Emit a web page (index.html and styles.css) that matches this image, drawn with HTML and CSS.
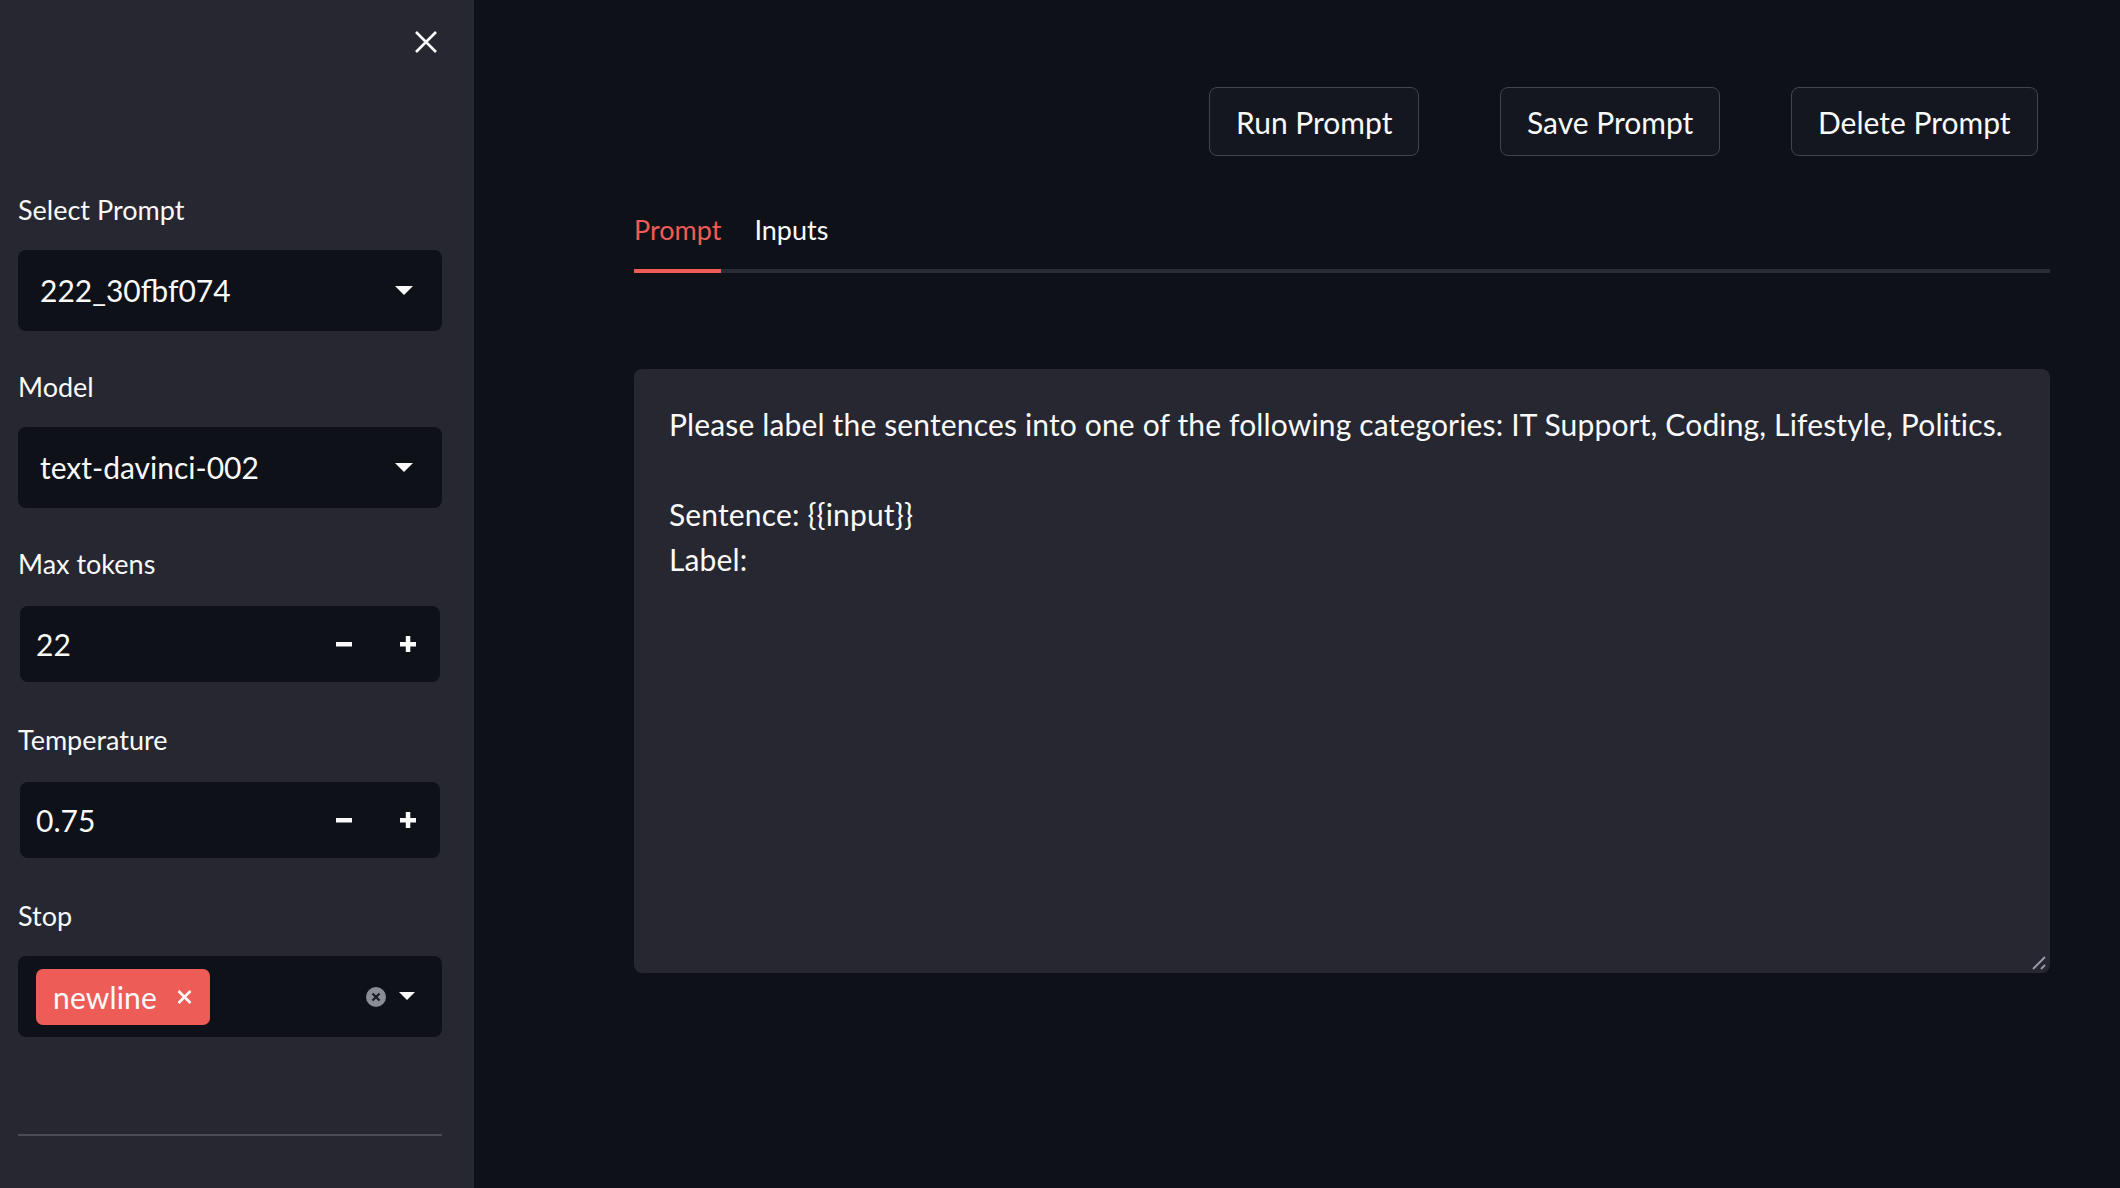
FILE: index.html
```html
<!DOCTYPE html>
<html lang="en">
<head>
<meta charset="utf-8">
<title>Prompt editor</title>
<link rel="stylesheet" href="styles.css">
</head>
<body>
<div class="app">
  <aside class="sidebar">
    <div class="sb-head">
      <button class="close-btn" aria-label="Close sidebar">
        <svg width="24" height="24" viewBox="0 0 24 24"><path d="M2 2 L22 22 M22 2 L2 22" stroke="#fafafa" stroke-width="2.6" stroke-linecap="butt" fill="none"/></svg>
      </button>
    </div>

    <div class="field">
      <div class="label">Select Prompt</div>
      <div class="select">
        <span class="value">222_30fbf074</span>
        <svg class="caret" width="18" height="9" viewBox="0 0 18 9"><polygon points="0,0 18,0 9,9" fill="#fafafa"/></svg>
      </div>
    </div>

    <div class="field">
      <div class="label">Model</div>
      <div class="select">
        <span class="value">text-davinci-002</span>
        <svg class="caret" width="18" height="9" viewBox="0 0 18 9"><polygon points="0,0 18,0 9,9" fill="#fafafa"/></svg>
      </div>
    </div>

    <div class="field">
      <div class="label">Max tokens</div>
      <div class="number">
        <div class="number-inner">
          <span class="num-value">22</span>
          <span class="step"><svg width="16" height="16" viewBox="0 0 16 16"><rect x="0" y="6" width="16" height="4.5" fill="#fafafa"/></svg></span>
          <span class="step"><svg width="16" height="16" viewBox="0 0 16 16"><rect x="0" y="6" width="16" height="4.5" fill="#fafafa"/><rect x="5.8" y="0" width="4.5" height="16" fill="#fafafa"/></svg></span>
        </div>
      </div>
    </div>

    <div class="field">
      <div class="label">Temperature</div>
      <div class="number">
        <div class="number-inner">
          <span class="num-value">0.75</span>
          <span class="step"><svg width="16" height="16" viewBox="0 0 16 16"><rect x="0" y="6" width="16" height="4.5" fill="#fafafa"/></svg></span>
          <span class="step"><svg width="16" height="16" viewBox="0 0 16 16"><rect x="0" y="6" width="16" height="4.5" fill="#fafafa"/><rect x="5.8" y="0" width="4.5" height="16" fill="#fafafa"/></svg></span>
        </div>
      </div>
    </div>

    <div class="field field-last">
      <div class="label">Stop</div>
      <div class="multi">
        <span class="tag">newline
          <svg class="tag-x" width="15" height="14" viewBox="0 0 15 14"><path d="M1.5 1 L13.5 13 M13.5 1 L1.5 13" stroke="#fafafa" stroke-width="2.6" fill="none"/></svg>
        </span>
        <span class="multi-icons">
          <svg width="20" height="20" viewBox="0 0 20 20"><circle cx="10" cy="10" r="10" fill="#8a8c96"/><path d="M6.5 6.5 L13.5 13.5 M13.5 6.5 L6.5 13.5" stroke="#1a1b21" stroke-width="2.2" fill="none"/></svg>
          <svg width="16" height="9" viewBox="0 0 16 9"><polygon points="0,0 16,0 8,8" fill="#fafafa"/></svg>
        </span>
      </div>
    </div>

    <div class="divider"></div>
  </aside>

  <main class="main">
    <div class="actions">
      <div></div>
      <div><button class="btn">Run Prompt</button></div>
      <div><button class="btn">Save Prompt</button></div>
      <div><button class="btn">Delete Prompt</button></div>
    </div>

    <div class="tabs">
      <div class="tab active">Prompt</div>
      <div class="tab">Inputs</div>
    </div>

    <div class="textarea">
      <div class="ta-text">Please label the sentences into one of the following categories: IT Support, Coding, Lifestyle, Politics.<br><br>Sentence: {{input}}<br>Label:</div>
      <svg class="resize" width="14" height="14" viewBox="0 0 14 14"><path d="M1 13 L13 1 M9 13 L13 9" stroke="#9a9ca6" stroke-width="1.8" fill="none"/></svg>
    </div>
  </main>
</div>
</body>
</html>
```

FILE: styles.css
```css
* { box-sizing: border-box; }

html, body {
  margin: 0;
  padding: 0;
  height: 100%;
  overflow: hidden;
}

body {
  background: #0e1117;
  color: #fafafa;
  font-family: Lato, "Liberation Sans", sans-serif;
}

.app {
  display: flex;
  height: 1188px;
}

/* ---------- sidebar ---------- */
.sidebar {
  width: 474px;
  flex: 0 0 474px;
  background: #262730;
  padding: 0 32px 0 18px;
}

.sb-head {
  height: 189px;
  display: flex;
  justify-content: flex-end;
  align-items: flex-start;
  padding-top: 30px;
  padding-right: 4px;
}

.close-btn {
  background: none;
  border: 0;
  padding: 0;
  width: 24px;
  height: 24px;
  display: block;
  cursor: pointer;
}
.close-btn svg { display: block; }

.field {
  margin-bottom: 35px;
}

.label {
  font-size: 27px;
  line-height: 42px;
  height: 40px;
  margin-bottom: 21px;
  color: #fafafa;
}

.select {
  height: 81px;
  background: #0e1117;
  border-radius: 8px;
  display: flex;
  align-items: center;
  padding: 0 29px 0 22px;
}
.select .value {
  flex: 1;
  font-size: 30px;
  margin-top: -2px;
}
.caret { display: block; }

.number {
  height: 80px;
  padding: 2px;
}
.number-inner {
  height: 76px;
  background: #0e1117;
  border-radius: 8px;
  display: flex;
  align-items: center;
  padding-left: 16px;
}
.num-value {
  flex: 1;
  font-size: 30px;
}
.step {
  width: 64px;
  height: 76px;
  display: flex;
  align-items: center;
  justify-content: center;
}
.step svg { display: block; }

.multi {
  height: 81px;
  background: #0e1117;
  border-radius: 8px;
  display: flex;
  align-items: center;
  padding: 0 27px 0 18px;
}
.tag {
  height: 56px;
  background: #ee5c58;
  border-radius: 7px;
  display: inline-flex;
  align-items: center;
  padding: 0 18px 0 17px;
  font-size: 30px;
  letter-spacing: 0.15px;
  color: #fafafa;
}
.tag-x {
  margin-left: 20px;
  display: block;
}
.multi-icons {
  margin-left: auto;
  display: flex;
  align-items: center;
  gap: 13px;
}
.multi-icons svg { display: block; }

.field-last {
  margin-top: 1px;
  margin-bottom: 0;
}

.divider {
  margin-top: 97px;
  height: 2px;
  background: #4a4b54;
}

/* ---------- main ---------- */
.main {
  flex: 1;
  padding: 87px 70px 0 160px;
}

.actions {
  display: grid;
  grid-template-columns: 543fr 259fr 259fr 259fr;
  column-gap: 32px;
}

.btn {
  height: 69px;
  padding: 0 26px;
  background: #141720;
  border: 1.5px solid #42454e;
  border-radius: 8px;
  color: #fafafa;
  font-family: Lato, "Liberation Sans", sans-serif;
  font-size: 30px;
  cursor: pointer;
}

.tabs {
  margin-top: 54px;
  display: flex;
  gap: 33px;
  box-shadow: inset 0 -4px 0 #2a2c35;
}
.tab {
  font-size: 27px;
  line-height: 40px;
  padding-bottom: 19px;
  border-bottom: 4px solid transparent;
  color: #fafafa;
}
.tab.active {
  color: #ee5c58;
  border-bottom-color: #ee5c58;
}

.textarea {
  position: relative;
  margin-top: 96px;
  height: 604px;
  background: #262730;
  border-radius: 8px;
  padding: 33px 35px;
}
.ta-text {
  font-size: 30px;
  line-height: 45px;
  letter-spacing: 0.15px;
  color: #fafafa;
}
.resize {
  position: absolute;
  right: 4px;
  bottom: 3px;
}
```
